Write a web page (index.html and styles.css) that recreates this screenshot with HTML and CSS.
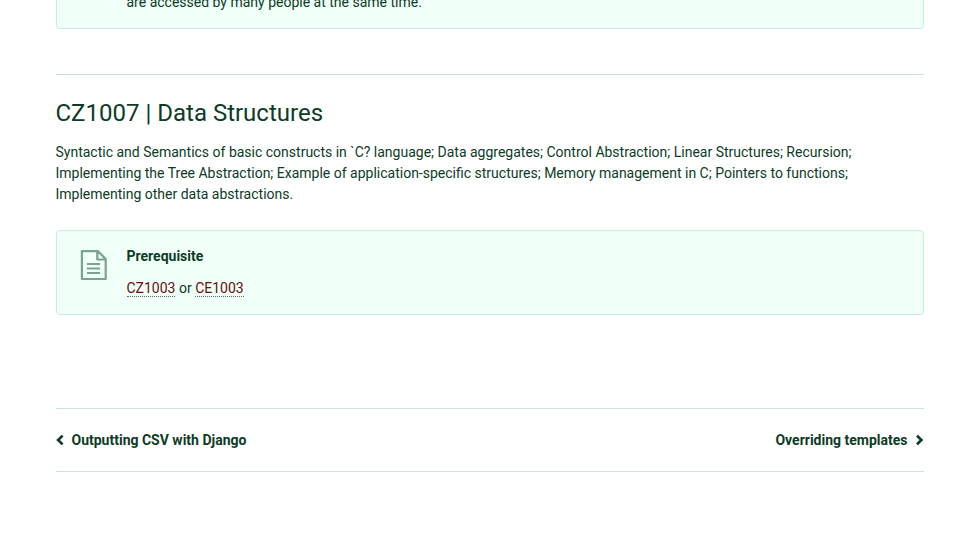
FILE: index.html
```html
<!DOCTYPE html>
<html lang="en">
<head>
<meta charset="utf-8">
<title>Data Structures</title>
<link rel="stylesheet" href="styles.css">
</head>
<body>
<main class="page">
  <aside class="note note-top"><p class="note-tail">are accessed by many people at the same time.</p></aside>
  <section class="course">
    <h2>CZ1007 | Data Structures</h2>
    <p>Syntactic and Semantics of basic constructs in `C? language; Data aggregates; Control Abstraction; Linear Structures; Recursion; Implementing the Tree Abstraction; Example of application-specific structures; Memory management in C; Pointers to functions; Implementing other data abstractions.</p>
    <aside class="note prereq">
      <svg class="doc" viewBox="0 0 28 32" width="28" height="32" fill="none" stroke="currentColor" stroke-width="2.2" stroke-linejoin="round"><path d="M1.9 2.1H17.8L25.7 10V30H1.9ZM17.3 2.5V10.5H25.5"/><path stroke-width="2" d="M7 15H20M7 19.5H20M7 24H20"/></svg>
      <div>
        <p class="label">Prerequisite</p>
        <p><a href="#">CZ1003</a> or <a href="#">CE1003</a></p>
      </div>
    </aside>
  </section>
  <nav class="pager">
    <a href="#"><svg viewBox="0 0 8 12" width="8" height="12"><path d="M6.6 1.6 2.1 6 6.6 10.4"/></svg>Outputting CSV with Django</a>
    <a href="#">Overriding templates<svg viewBox="0 0 8 12" width="8" height="12"><path d="M1 1.6 5.4 6 1 10.4"/></svg></a>
  </nav>
</main>
</body>
</html>
```
FILE: styles.css
```css
* { box-sizing: border-box; }
body { margin: 0; background: #fff; color: #0c3c26; font: 14px/21px Roboto, sans-serif; overflow: hidden; }
.page { width: 868px; margin: 0 auto; }
h2, p { margin: 0; }
.note { background: #f0fff8; border: 1px solid #c4f0de; border-radius: 4px; }
.note-top { display: flow-root; height: 29px; border-top: 0; border-radius: 0 0 4px 4px; padding-left: 70px; }
.note-tail { margin-top: -8px; }
.course { margin-top: 45px; border-top: 1px solid #c9e3d9; padding-top: 23px; }
h2 { font-size: 24px; line-height: 31px; font-weight: 400; margin-bottom: 13px; }
.prereq { display: flex; height: 85px; margin-top: 25px; padding: 15px 23px; }
.doc { flex: none; margin: 3px 19px 0 0; color: #79a393; }
.label { font-weight: 700; margin-bottom: 11px; }
.prereq a { color: #6a0e0e; text-decoration: none; border-bottom: 1px dotted #5d7067; }
.pager { display: flex; justify-content: space-between; align-items: center; height: 64px; margin-top: 93px; border: solid #c9e3d9; border-width: 1px 0; }
.pager a { display: flex; align-items: center; gap: 8px; font-weight: 700; color: inherit; text-decoration: none; }
.pager svg { fill: none; stroke: currentColor; stroke-width: 2.7; overflow: visible; }
```
